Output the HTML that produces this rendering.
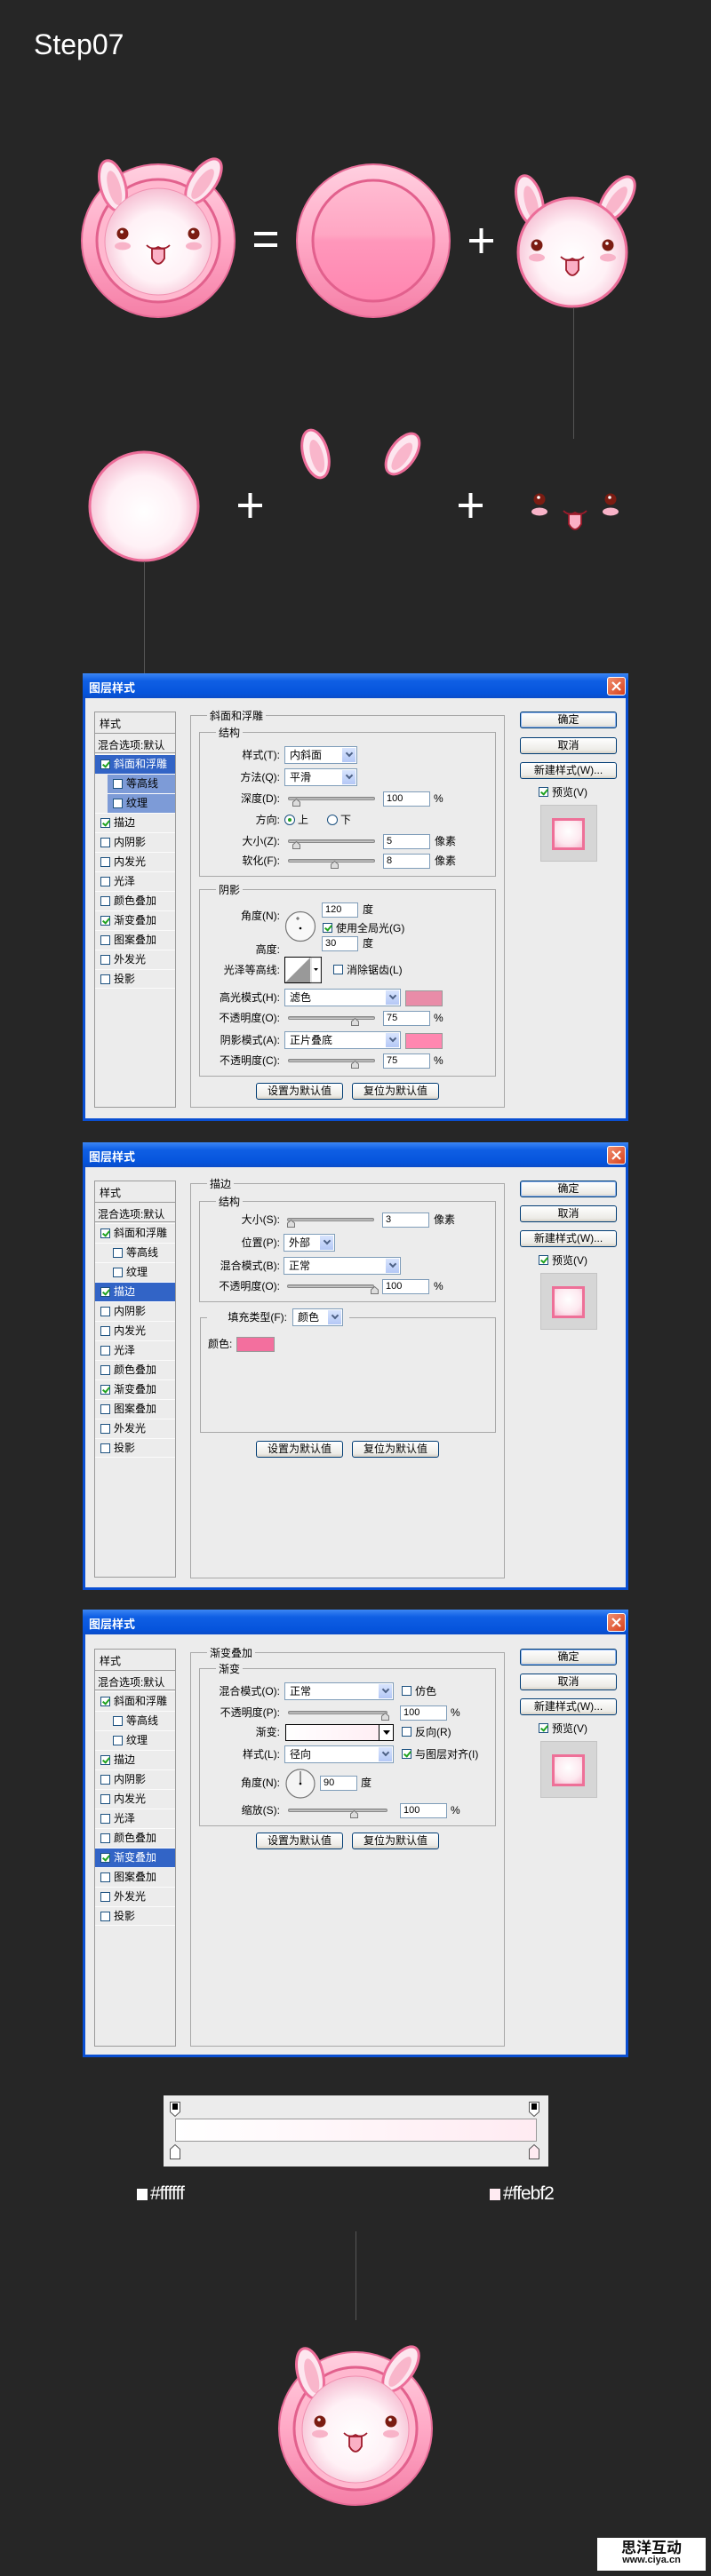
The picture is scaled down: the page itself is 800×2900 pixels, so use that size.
<!DOCTYPE html>
<html><head><meta charset="utf-8">
<style>
*{margin:0;padding:0;box-sizing:border-box}
body{width:800px;height:2900px;background:#262626;position:relative;overflow:hidden;font-family:"Liberation Sans","Noto Sans CJK SC",sans-serif;font-size:12px;color:#000}
.a{position:absolute}
.dlg{position:absolute;left:93px;width:614px;height:504px;background:#0a4fd2}
.tb{position:absolute;left:0;top:0;right:0;height:28px;background:linear-gradient(#3c86f4,#0f5fe4 30%,#0654dc 80%,#0a4cc8)}
.tt{position:absolute;left:7px;top:6px;color:#fff;font-weight:bold;font-size:13px}
.cl{position:absolute;left:590px;top:4px;width:21px;height:21px;border:1px solid #fff;border-radius:3px;background:linear-gradient(135deg,#f09070,#d8401c)}
.body{position:absolute;left:3px;top:28px;right:3px;bottom:3px;background:#ececec}
.list{position:absolute;left:13px;width:92px;border:1px solid #9a9a9a;background:#ececec}
.it{position:absolute;left:0;width:90px;height:22px;border-top:1px solid #fbfbfb;line-height:21px;font-size:12px}
.it span.t{position:absolute;left:21px}
.it.sub span.t{left:35px}
.sel{background:#3264c6;color:#fff}
.subsel{background:#7d9bd7;left:14px;width:76px}
.cb{position:absolute;width:11px;height:11px;border:1px solid #1c5180;background:#fff}
.cb.on::after{content:"";position:absolute;left:3px;top:0;width:3px;height:6px;border:solid #1fa31f;border-width:0 2px 2px 0;transform:rotate(40deg)}
.grp{position:absolute;border:1px solid #a8a8a8}
.lg{position:absolute;top:-9px;background:#ececec;padding:0 3px;font-size:12px}
.lb{position:absolute;text-align:right;width:130px;font-size:12px;line-height:14px}
.sel-b{position:absolute;height:20px;background:#fff;border:1px solid #7f9db9;font-size:12px;line-height:18px;padding-left:5px}
.sel-b::after{content:"";position:absolute;right:1px;top:1px;width:15px;height:16px;background:linear-gradient(#d8e4fd,#b4c8f6)}
.sel-b i{position:absolute;right:5px;top:4px;width:6px;height:6px;border:solid #4d6185;border-width:0 2px 2px 0;transform:rotate(45deg);z-index:2}
.inp{position:absolute;height:17px;background:#fff;border:1px solid #7f9db9;font-size:11px;line-height:15px;padding-left:3px}
.sl{position:absolute;height:4px;border-radius:2px;background:linear-gradient(#9a9a9a,#d8d8d8);border:1px solid #888}
.th{position:absolute;width:9px;height:9px}
.btn{position:absolute;height:19px;border:1px solid #003c74;border-radius:3px;background:linear-gradient(#fff,#ecebe6 80%,#d6d0c5);text-align:center;font-size:12px;line-height:17px}
.btn.def{box-shadow:inset 0 0 0 1px #8cb4f2}
.rd{position:absolute;width:12px;height:12px;border-radius:50%;border:1px solid #1c5180;background:#fff}
.sw{position:absolute;border:1px solid #999}
.t11{position:absolute;font-size:12px;line-height:14px}
</style></head><body>

<div class="a" style="left:38px;top:30px;color:#fff;font-size:32px;line-height:40px">Step07</div>

<svg class="a" style="left:0;top:0" width="800" height="760" viewBox="0 0 800 760">
<defs>
<linearGradient id="rg" x1="0" y1="0" x2="0" y2="1"><stop offset="0" stop-color="#ffd0e0"/><stop offset=".5" stop-color="#ffa9c6"/><stop offset="1" stop-color="#f57fa7"/></linearGradient>
<linearGradient id="bi" x1="0" y1="0" x2="0" y2="1"><stop offset="0" stop-color="#ffbcd2"/><stop offset=".45" stop-color="#ffa6c3"/><stop offset=".5" stop-color="#ff97bb"/><stop offset="1" stop-color="#ff86b0"/></linearGradient>
<radialGradient id="fg" cx=".5" cy=".55" r=".55"><stop offset="0" stop-color="#ffffff"/><stop offset=".6" stop-color="#fff1f6"/><stop offset="1" stop-color="#f6bfd3"/></radialGradient>
<g id="ear"><ellipse rx="14" ry="29" fill="#fde6ef" stroke="#ec6d99" stroke-width="3"/><ellipse cx="1" cy="3" rx="7" ry="20" fill="#f9b6cb"/></g>
<g id="face">
<circle cx="-40" cy="-8" r="6.5" fill="#7b1c12"/><circle cx="-41" cy="-10" r="1.8" fill="#fff"/>
<circle cx="40" cy="-8" r="6.5" fill="#7b1c12"/><circle cx="39" cy="-10" r="1.8" fill="#fff"/>
<ellipse cx="-40" cy="6" rx="9" ry="4.5" fill="#f8b3c8"/><ellipse cx="40" cy="6" rx="9" ry="4.5" fill="#f8b3c8"/>
<path d="M-7 9 L-7 20 Q0 32 7 20 L7 9 Z" fill="#fbb0c5" stroke="#9e1b2b" stroke-width="1.8"/>
<path d="M-13 5 Q-7 11 0 7 Q7 11 13 5" fill="none" stroke="#9e1b2b" stroke-width="1.8"/>
</g>
<g id="head">
<use href="#ear" transform="translate(-48,-58) rotate(-15)"/>
<use href="#ear" transform="translate(50,-60) rotate(35)"/>
<circle r="61" fill="url(#fg)" stroke="#ec6d99" stroke-width="3"/>
<use href="#face"/>
</g>
<g id="combo">
<circle r="86" fill="url(#rg)" stroke="#e86c98" stroke-width="2"/>
<circle r="69" fill="#ffb8cf" stroke="#e2618d" stroke-width="3"/>
<use href="#ear" transform="translate(-51,-62) rotate(-15)"/>
<use href="#ear" transform="translate(51,-67) rotate(35)"/>
<circle r="60" cy="1" fill="url(#fg)" stroke="#f090b0" stroke-width="1"/>
<use href="#face" transform="translate(0,0)"/>
</g>
</defs>
<use href="#combo" transform="translate(178,271)"/>
<rect x="286" y="261" width="26" height="4" fill="#fff"/><rect x="286" y="274" width="26" height="4" fill="#fff"/>
<circle cx="420" cy="271" r="86" fill="url(#rg)" stroke="#e86c98" stroke-width="2"/>
<circle cx="420" cy="271" r="68" fill="url(#bi)" stroke="#e2608d" stroke-width="3"/>
<rect x="528" y="269" width="27" height="4" fill="#fff"/><rect x="539.5" y="257" width="4" height="28" fill="#fff"/>
<use href="#head" transform="translate(644,284)"/>
<line x1="645.5" y1="346" x2="645.5" y2="494" stroke="#555" stroke-width="1"/>
<circle cx="162" cy="570" r="61" fill="url(#fg)" stroke="#ec6d99" stroke-width="3"/>
<line x1="162.5" y1="632" x2="162.5" y2="760" stroke="#555" stroke-width="1"/>
<rect x="268" y="567" width="27" height="4" fill="#fff"/><rect x="279.5" y="555" width="4" height="28" fill="#fff"/>
<use href="#ear" transform="translate(355,511) rotate(-15) scale(1,.95)"/>
<use href="#ear" transform="translate(453,511) rotate(35) scale(1,.9)"/>
<rect x="516" y="567" width="27" height="4" fill="#fff"/><rect x="527.5" y="555" width="4" height="28" fill="#fff"/>
<use href="#face" transform="translate(647,570)"/>
</svg>

<!-- DIALOG 1 -->
<div class="dlg" style="top:758px">
<div class="tb"></div><div class="tt">图层样式</div>
<div class="cl"><svg width="19" height="19"><path d="M5 5L14 14M14 5L5 14" stroke="#fff" stroke-width="2.2"/></svg></div>
<div class="body"></div>
<div class="list" style="top:43px;height:446px">
 <div class="a" style="left:5px;top:4px">样式</div>
 <div class="a" style="left:0;top:23px;width:90px;border-top:1px solid #9a9a9a;height:23px;border-bottom:1px solid #9a9a9a"><span class="a" style="left:3px;top:4px">混合选项:默认</span></div>
 <div class="it sel" style="top:47px"><span class="cb on" style="left:6px;top:5px"></span><span class="t">斜面和浮雕</span></div>
 <div class="it sub subsel" style="top:69px"><span class="cb" style="left:6px;top:5px"></span><span class="t" style="left:21px">等高线</span></div>
 <div class="it sub subsel" style="top:91px"><span class="cb" style="left:6px;top:5px"></span><span class="t" style="left:21px">纹理</span></div>
 <div class="it" style="top:113px"><span class="cb on" style="left:6px;top:5px"></span><span class="t">描边</span></div>
 <div class="it" style="top:135px"><span class="cb" style="left:6px;top:5px"></span><span class="t">内阴影</span></div>
 <div class="it" style="top:157px"><span class="cb" style="left:6px;top:5px"></span><span class="t">内发光</span></div>
 <div class="it" style="top:179px"><span class="cb" style="left:6px;top:5px"></span><span class="t">光泽</span></div>
 <div class="it" style="top:201px"><span class="cb" style="left:6px;top:5px"></span><span class="t">颜色叠加</span></div>
 <div class="it" style="top:223px"><span class="cb on" style="left:6px;top:5px"></span><span class="t">渐变叠加</span></div>
 <div class="it" style="top:245px"><span class="cb" style="left:6px;top:5px"></span><span class="t">图案叠加</span></div>
 <div class="it" style="top:267px"><span class="cb" style="left:6px;top:5px"></span><span class="t">外发光</span></div>
 <div class="it" style="top:289px;border-bottom:1px solid #fbfbfb"><span class="cb" style="left:6px;top:5px"></span><span class="t">投影</span></div>
</div>
<div class="grp" style="left:121px;top:47px;width:354px;height:442px"><span class="lg" style="left:18px">斜面和浮雕</span></div>
<div class="grp" style="left:131px;top:66px;width:334px;height:163px"><span class="lg" style="left:18px">结构</span></div>
<div class="grp" style="left:131px;top:243px;width:334px;height:211px"><span class="lg" style="left:18px">阴影</span></div>

<div class="lb" style="left:92px;top:85px">样式(T):</div><div class="sel-b" style="left:227px;top:82px;width:82px">内斜面<i></i></div>
<div class="lb" style="left:92px;top:110px">方法(Q):</div><div class="sel-b" style="left:227px;top:107px;width:82px">平滑<i></i></div>
<div class="lb" style="left:92px;top:134px">深度(D):</div><div class="sl" style="left:231px;top:139px;width:98px"></div><svg class="th" style="left:236px;top:141px"><path d="M0.5 8.5V4L4.5 0.5L8.5 4V8.5Z" fill="#ddd" stroke="#777"/></svg><div class="inp" style="left:338px;top:133px;width:53px">100</div><div class="t11" style="left:395px;top:134px">%</div>
<div class="lb" style="left:92px;top:158px">方向:</div><div class="rd" style="left:227px;top:159px"><div class="a" style="left:3px;top:3px;width:4px;height:4px;border-radius:50%;background:#21a121"></div></div><div class="t11" style="left:242px;top:158px">上</div><div class="rd" style="left:275px;top:159px"></div><div class="t11" style="left:290px;top:158px">下</div>
<div class="lb" style="left:92px;top:182px">大小(Z):</div><div class="sl" style="left:231px;top:187px;width:98px"></div><svg class="th" style="left:236px;top:189px"><path d="M0.5 8.5V4L4.5 0.5L8.5 4V8.5Z" fill="#ddd" stroke="#777"/></svg><div class="inp" style="left:338px;top:181px;width:53px">5</div><div class="t11" style="left:396px;top:182px">像素</div>
<div class="lb" style="left:92px;top:204px">软化(F):</div><div class="sl" style="left:231px;top:209px;width:98px"></div><svg class="th" style="left:279px;top:211px"><path d="M0.5 8.5V4L4.5 0.5L8.5 4V8.5Z" fill="#ddd" stroke="#777"/></svg><div class="inp" style="left:338px;top:203px;width:53px">8</div><div class="t11" style="left:396px;top:204px">像素</div>

<div class="lb" style="left:92px;top:266px">角度(N):</div>
<svg class="a" style="left:227px;top:267px" width="36" height="36"><circle cx="18" cy="18" r="16.5" fill="#f8f8f8" stroke="#777" stroke-width="1.2"/><circle cx="18" cy="20" r="1.3" fill="#000"/><path d="M13 9h4M15 7v4" stroke="#333" stroke-width=".8"/></svg>
<div class="inp" style="left:269px;top:258px;width:41px">120</div><div class="t11" style="left:315px;top:259px">度</div>
<span class="cb on" style="left:270px;top:281px"></span><div class="t11" style="left:285px;top:280px">使用全局光(G)</div>
<div class="lb" style="left:92px;top:304px">高度:</div><div class="inp" style="left:269px;top:296px;width:41px">30</div><div class="t11" style="left:315px;top:297px">度</div>
<div class="lb" style="left:92px;top:327px">光泽等高线:</div>
<svg class="a" style="left:227px;top:319px" width="42" height="30"><rect x=".5" y=".5" width="41" height="29" fill="#fff" stroke="#000"/><path d="M1 29L29 1V29Z" fill="#999"/><rect x="30" y="1" width="11" height="28" fill="#fff" stroke="#999" stroke-width=".5"/><path d="M33 13h5l-2.5 3z" fill="#000"/></svg>
<span class="cb" style="left:282px;top:328px"></span><div class="t11" style="left:297px;top:327px">消除锯齿(L)</div>
<div class="lb" style="left:92px;top:358px">高光模式(H):</div><div class="sel-b" style="left:227px;top:355px;width:131px">滤色<i></i></div><div class="sw" style="left:363px;top:357px;width:42px;height:18px;background:#e98ca8"></div>
<div class="lb" style="left:92px;top:381px">不透明度(O):</div><div class="sl" style="left:231px;top:386px;width:98px"></div><svg class="th" style="left:302px;top:388px"><path d="M0.5 8.5V4L4.5 0.5L8.5 4V8.5Z" fill="#ddd" stroke="#777"/></svg><div class="inp" style="left:338px;top:380px;width:53px">75</div><div class="t11" style="left:395px;top:381px">%</div>
<div class="lb" style="left:92px;top:406px">阴影模式(A):</div><div class="sel-b" style="left:227px;top:403px;width:131px">正片叠底<i></i></div><div class="sw" style="left:363px;top:405px;width:42px;height:18px;background:#ff87b0"></div>
<div class="lb" style="left:92px;top:429px">不透明度(C):</div><div class="sl" style="left:231px;top:434px;width:98px"></div><svg class="th" style="left:302px;top:436px"><path d="M0.5 8.5V4L4.5 0.5L8.5 4V8.5Z" fill="#ddd" stroke="#777"/></svg><div class="inp" style="left:338px;top:428px;width:53px">75</div><div class="t11" style="left:395px;top:429px">%</div>
<div class="btn" style="left:195px;top:461px;width:98px">设置为默认值</div><div class="btn" style="left:303px;top:461px;width:98px">复位为默认值</div>

<div class="btn def" style="left:492px;top:43px;width:109px">确定</div>
<div class="btn" style="left:492px;top:72px;width:109px">取消</div>
<div class="btn" style="left:492px;top:100px;width:109px">新建样式(W)...</div>
<span class="cb on" style="left:513px;top:128px"></span><div class="t11" style="left:528px;top:127px">预览(V)</div>
<div class="a" style="left:515px;top:148px;width:64px;height:64px;background:#d6d6d6;border:1px solid #c4c4c4"></div>
<div class="a" style="left:528px;top:163px;width:37px;height:36px;border:3px solid #ee7098;background:radial-gradient(circle at 50% 40%,#fff,#fde8ef 60%,#f6b9cf)"></div>
</div>

<!-- DIALOG 2 -->
<div class="dlg" style="top:1286px">
<div class="tb"></div><div class="tt">图层样式</div>
<div class="cl"><svg width="19" height="19"><path d="M5 5L14 14M14 5L5 14" stroke="#fff" stroke-width="2.2"/></svg></div>
<div class="body"></div>
<div class="list" style="top:43px;height:447px">
 <div class="a" style="left:5px;top:4px">样式</div>
 <div class="a" style="left:0;top:23px;width:90px;border-top:1px solid #9a9a9a;height:23px;border-bottom:1px solid #9a9a9a"><span class="a" style="left:3px;top:4px">混合选项:默认</span></div>
 <div class="it" style="top:47px"><span class="cb on" style="left:6px;top:5px"></span><span class="t">斜面和浮雕</span></div>
 <div class="it sub" style="top:69px"><span class="cb" style="left:20px;top:5px"></span><span class="t">等高线</span></div>
 <div class="it sub" style="top:91px"><span class="cb" style="left:20px;top:5px"></span><span class="t">纹理</span></div>
 <div class="it sel" style="top:113px"><span class="cb on" style="left:6px;top:5px"></span><span class="t">描边</span></div>
 <div class="it" style="top:135px"><span class="cb" style="left:6px;top:5px"></span><span class="t">内阴影</span></div>
 <div class="it" style="top:157px"><span class="cb" style="left:6px;top:5px"></span><span class="t">内发光</span></div>
 <div class="it" style="top:179px"><span class="cb" style="left:6px;top:5px"></span><span class="t">光泽</span></div>
 <div class="it" style="top:201px"><span class="cb" style="left:6px;top:5px"></span><span class="t">颜色叠加</span></div>
 <div class="it" style="top:223px"><span class="cb on" style="left:6px;top:5px"></span><span class="t">渐变叠加</span></div>
 <div class="it" style="top:245px"><span class="cb" style="left:6px;top:5px"></span><span class="t">图案叠加</span></div>
 <div class="it" style="top:267px"><span class="cb" style="left:6px;top:5px"></span><span class="t">外发光</span></div>
 <div class="it" style="top:289px;border-bottom:1px solid #fbfbfb"><span class="cb" style="left:6px;top:5px"></span><span class="t">投影</span></div>
</div>
<div class="grp" style="left:121px;top:46px;width:354px;height:445px"><span class="lg" style="left:18px">描边</span></div>
<div class="grp" style="left:131px;top:66px;width:334px;height:114px"><span class="lg" style="left:18px">结构</span></div>
<div class="lb" style="left:92px;top:80px">大小(S):</div><div class="sl" style="left:230px;top:85px;width:98px"></div><svg class="th" style="left:230px;top:87px"><path d="M0.5 8.5V4L4.5 0.5L8.5 4V8.5Z" fill="#ddd" stroke="#777"/></svg><div class="inp" style="left:337px;top:79px;width:53px">3</div><div class="t11" style="left:395px;top:80px">像素</div>
<div class="lb" style="left:92px;top:106px">位置(P):</div><div class="sel-b" style="left:226px;top:103px;width:58px">外部<i></i></div>
<div class="lb" style="left:92px;top:132px">混合模式(B):</div><div class="sel-b" style="left:226px;top:129px;width:132px">正常<i></i></div>
<div class="lb" style="left:92px;top:155px">不透明度(O):</div><div class="sl" style="left:230px;top:160px;width:98px"></div><svg class="th" style="left:324px;top:162px"><path d="M0.5 8.5V4L4.5 0.5L8.5 4V8.5Z" fill="#ddd" stroke="#777"/></svg><div class="inp" style="left:337px;top:154px;width:53px">100</div><div class="t11" style="left:395px;top:155px">%</div>
<div class="grp" style="left:132px;top:197px;width:333px;height:130px"></div>
<div class="a" style="left:140px;top:189px;width:160px;height:20px;background:#ececec"></div>
<div class="lb" style="left:100px;top:190px">填充类型(F):</div><div class="sel-b" style="left:236px;top:187px;width:57px">颜色<i></i></div>
<div class="t11" style="left:141px;top:220px">颜色:</div><div class="sw" style="left:173px;top:219px;width:43px;height:17px;background:#f36f9e"></div>
<div class="btn" style="left:195px;top:336px;width:98px">设置为默认值</div><div class="btn" style="left:303px;top:336px;width:98px">复位为默认值</div>
<div class="btn def" style="left:492px;top:43px;width:109px">确定</div>
<div class="btn" style="left:492px;top:71px;width:109px">取消</div>
<div class="btn" style="left:492px;top:99px;width:109px">新建样式(W)...</div>
<span class="cb on" style="left:513px;top:127px"></span><div class="t11" style="left:528px;top:126px">预览(V)</div>
<div class="a" style="left:515px;top:147px;width:64px;height:64px;background:#d6d6d6;border:1px solid #c4c4c4"></div>
<div class="a" style="left:528px;top:162px;width:37px;height:36px;border:3px solid #ee7098;background:radial-gradient(circle at 50% 40%,#fff,#fde8ef 60%,#f6b9cf)"></div>
</div>

<!-- DIALOG 3 -->
<div class="dlg" style="top:1812px">
<div class="tb"></div><div class="tt">图层样式</div>
<div class="cl"><svg width="19" height="19"><path d="M5 5L14 14M14 5L5 14" stroke="#fff" stroke-width="2.2"/></svg></div>
<div class="body"></div>
<div class="list" style="top:44px;height:448px">
 <div class="a" style="left:5px;top:4px">样式</div>
 <div class="a" style="left:0;top:23px;width:90px;border-top:1px solid #9a9a9a;height:23px;border-bottom:1px solid #9a9a9a"><span class="a" style="left:3px;top:4px">混合选项:默认</span></div>
 <div class="it" style="top:47px"><span class="cb on" style="left:6px;top:5px"></span><span class="t">斜面和浮雕</span></div>
 <div class="it sub" style="top:69px"><span class="cb" style="left:20px;top:5px"></span><span class="t">等高线</span></div>
 <div class="it sub" style="top:91px"><span class="cb" style="left:20px;top:5px"></span><span class="t">纹理</span></div>
 <div class="it" style="top:113px"><span class="cb on" style="left:6px;top:5px"></span><span class="t">描边</span></div>
 <div class="it" style="top:135px"><span class="cb" style="left:6px;top:5px"></span><span class="t">内阴影</span></div>
 <div class="it" style="top:157px"><span class="cb" style="left:6px;top:5px"></span><span class="t">内发光</span></div>
 <div class="it" style="top:179px"><span class="cb" style="left:6px;top:5px"></span><span class="t">光泽</span></div>
 <div class="it" style="top:201px"><span class="cb" style="left:6px;top:5px"></span><span class="t">颜色叠加</span></div>
 <div class="it sel" style="top:223px"><span class="cb on" style="left:6px;top:5px"></span><span class="t">渐变叠加</span></div>
 <div class="it" style="top:245px"><span class="cb" style="left:6px;top:5px"></span><span class="t">图案叠加</span></div>
 <div class="it" style="top:267px"><span class="cb" style="left:6px;top:5px"></span><span class="t">外发光</span></div>
 <div class="it" style="top:289px;border-bottom:1px solid #fbfbfb"><span class="cb" style="left:6px;top:5px"></span><span class="t">投影</span></div>
</div>
<div class="grp" style="left:121px;top:48px;width:354px;height:444px"><span class="lg" style="left:18px">渐变叠加</span></div>
<div class="grp" style="left:131px;top:66px;width:334px;height:178px"><span class="lg" style="left:18px">渐变</span></div>
<div class="lb" style="left:92px;top:85px">混合模式(O):</div><div class="sel-b" style="left:227px;top:82px;width:123px">正常<i></i></div>
<span class="cb" style="left:359px;top:86px"></span><div class="t11" style="left:374px;top:85px">仿色</div>
<div class="lb" style="left:92px;top:109px">不透明度(P):</div><div class="sl" style="left:231px;top:114px;width:112px"></div><svg class="th" style="left:336px;top:116px"><path d="M0.5 8.5V4L4.5 0.5L8.5 4V8.5Z" fill="#ddd" stroke="#777"/></svg><div class="inp" style="left:357px;top:108px;width:53px">100</div><div class="t11" style="left:414px;top:109px">%</div>
<div class="lb" style="left:92px;top:131px">渐变:</div>
<div class="a" style="left:228px;top:129px;width:122px;height:19px;border:1px solid #000;background:linear-gradient(90deg,#fff,#ffebf2)"><div class="a" style="right:0;top:0;width:16px;height:17px;background:#fff;border-left:1px solid #000"><svg width="16" height="17"><path d="M4 6h8l-4 5z" fill="#000"/></svg></div></div>
<span class="cb" style="left:359px;top:132px"></span><div class="t11" style="left:374px;top:131px">反向(R)</div>
<div class="lb" style="left:92px;top:156px">样式(L):</div><div class="sel-b" style="left:227px;top:153px;width:123px">径向<i></i></div>
<span class="cb on" style="left:359px;top:157px"></span><div class="t11" style="left:374px;top:156px">与图层对齐(I)</div>
<div class="lb" style="left:92px;top:188px">角度(N):</div>
<svg class="a" style="left:228px;top:179px" width="34" height="34"><circle cx="17" cy="17" r="16" fill="#f4f4f4" stroke="#777" stroke-width="1.2"/><line x1="17" y1="17" x2="17" y2="3" stroke="#333"/><circle cx="17" cy="17" r="1.3" fill="#000"/></svg>
<div class="inp" style="left:267px;top:187px;width:42px">90</div><div class="t11" style="left:313px;top:188px">度</div>
<div class="lb" style="left:92px;top:219px">缩放(S):</div><div class="sl" style="left:231px;top:224px;width:112px"></div><svg class="th" style="left:301px;top:226px"><path d="M0.5 8.5V4L4.5 0.5L8.5 4V8.5Z" fill="#ddd" stroke="#777"/></svg><div class="inp" style="left:357px;top:218px;width:53px">100</div><div class="t11" style="left:414px;top:219px">%</div>
<div class="btn" style="left:195px;top:251px;width:98px">设置为默认值</div><div class="btn" style="left:303px;top:251px;width:98px">复位为默认值</div>
<div class="btn def" style="left:492px;top:44px;width:109px">确定</div>
<div class="btn" style="left:492px;top:72px;width:109px">取消</div>
<div class="btn" style="left:492px;top:100px;width:109px">新建样式(W)...</div>
<span class="cb on" style="left:513px;top:128px"></span><div class="t11" style="left:528px;top:127px">预览(V)</div>
<div class="a" style="left:515px;top:148px;width:64px;height:64px;background:#d6d6d6;border:1px solid #c4c4c4"></div>
<div class="a" style="left:528px;top:163px;width:37px;height:36px;border:3px solid #ee7098;background:radial-gradient(circle at 50% 40%,#fff,#fde8ef 60%,#f6b9cf)"></div>
</div>

<!-- gradient panel -->
<div class="a" style="left:184px;top:2359px;width:433px;height:80px;background:#ececec"></div>
<div class="a" style="left:197px;top:2385px;width:407px;height:26px;border:1px solid #999;background:linear-gradient(90deg,#fff,#ffebf2)"></div>
<svg class="a" style="left:190px;top:2366px" width="425" height="66">
<path d="M1.5 0.5h11v11l-5.5 5l-5.5-5z" fill="#fff" stroke="#555"/><rect x="4" y="2" width="6" height="7" fill="#000"/>
<path d="M405.5 0.5h11v11l-5.5 5l-5.5-5z" fill="#fff" stroke="#555"/><rect x="408" y="2" width="6" height="7" fill="#000"/>
<path d="M1.5 64.5h11v-11l-5.5-5l-5.5 5z" fill="#fff" stroke="#555"/>
<path d="M405.5 64.5h11v-11l-5.5-5l-5.5 5z" fill="#ffebf2" stroke="#555"/>
</svg>
<div class="a" style="left:154px;top:2464px;width:12px;height:13px;background:#fff"></div>
<div class="a" style="left:169px;top:2458px;color:#fff;font-size:21px;line-height:24px;letter-spacing:-1px">#ffffff</div>
<div class="a" style="left:551px;top:2464px;width:12px;height:13px;background:#ffebf2"></div>
<div class="a" style="left:566px;top:2458px;color:#fff;font-size:21px;line-height:24px;letter-spacing:-1px">#ffebf2</div>
<div class="a" style="left:400px;top:2512px;width:1px;height:100px;background:#555"></div>

<svg class="a" style="left:300px;top:2630px" width="200" height="200" viewBox="0 0 200 200">
<defs>
<linearGradient id="rg2" x1="0" y1="0" x2="0" y2="1"><stop offset="0" stop-color="#ffd0e0"/><stop offset=".5" stop-color="#ffa9c6"/><stop offset="1" stop-color="#f57fa7"/></linearGradient>
<radialGradient id="fg2" cx=".5" cy=".55" r=".55"><stop offset="0" stop-color="#ffffff"/><stop offset=".6" stop-color="#fff1f6"/><stop offset="1" stop-color="#f6bfd3"/></radialGradient>
<g id="ear2"><ellipse rx="14" ry="29" fill="#fde6ef" stroke="#ec6d99" stroke-width="3"/><ellipse cx="1" cy="3" rx="7" ry="20" fill="#f9b6cb"/></g>
</defs>
<g transform="translate(100,104)">
<circle r="86" fill="url(#rg2)" stroke="#e86c98" stroke-width="2"/>
<circle r="69" fill="#ffb8cf" stroke="#e2618d" stroke-width="3"/>
<use href="#ear2" transform="translate(-51,-62) rotate(-15)"/>
<use href="#ear2" transform="translate(51,-67) rotate(35)"/>
<circle r="60" cy="1" fill="url(#fg2)" stroke="#f090b0" stroke-width="1"/>
<circle cx="-40" cy="-8" r="6.5" fill="#7b1c12"/><circle cx="-41" cy="-10" r="1.8" fill="#fff"/>
<circle cx="40" cy="-8" r="6.5" fill="#7b1c12"/><circle cx="39" cy="-10" r="1.8" fill="#fff"/>
<ellipse cx="-40" cy="6" rx="9" ry="4.5" fill="#f8b3c8"/><ellipse cx="40" cy="6" rx="9" ry="4.5" fill="#f8b3c8"/>
<path d="M-7 9 L-7 20 Q0 32 7 20 L7 9 Z" fill="#fbb0c5" stroke="#9e1b2b" stroke-width="1.8"/>
<path d="M-13 5 Q-7 11 0 7 Q7 11 13 5" fill="none" stroke="#9e1b2b" stroke-width="1.8"/>
</g>
</svg>

<div class="a" style="left:672px;top:2857px;width:122px;height:37px;background:#fff;text-align:center">
<div style="font-size:17px;line-height:19px;font-weight:bold;color:#111;font-family:'Noto Sans CJK SC',sans-serif">思洋互动</div>
<div style="font-size:11px;line-height:13px;font-weight:bold;color:#111">www.ciya.cn</div>
</div>
</body></html>
